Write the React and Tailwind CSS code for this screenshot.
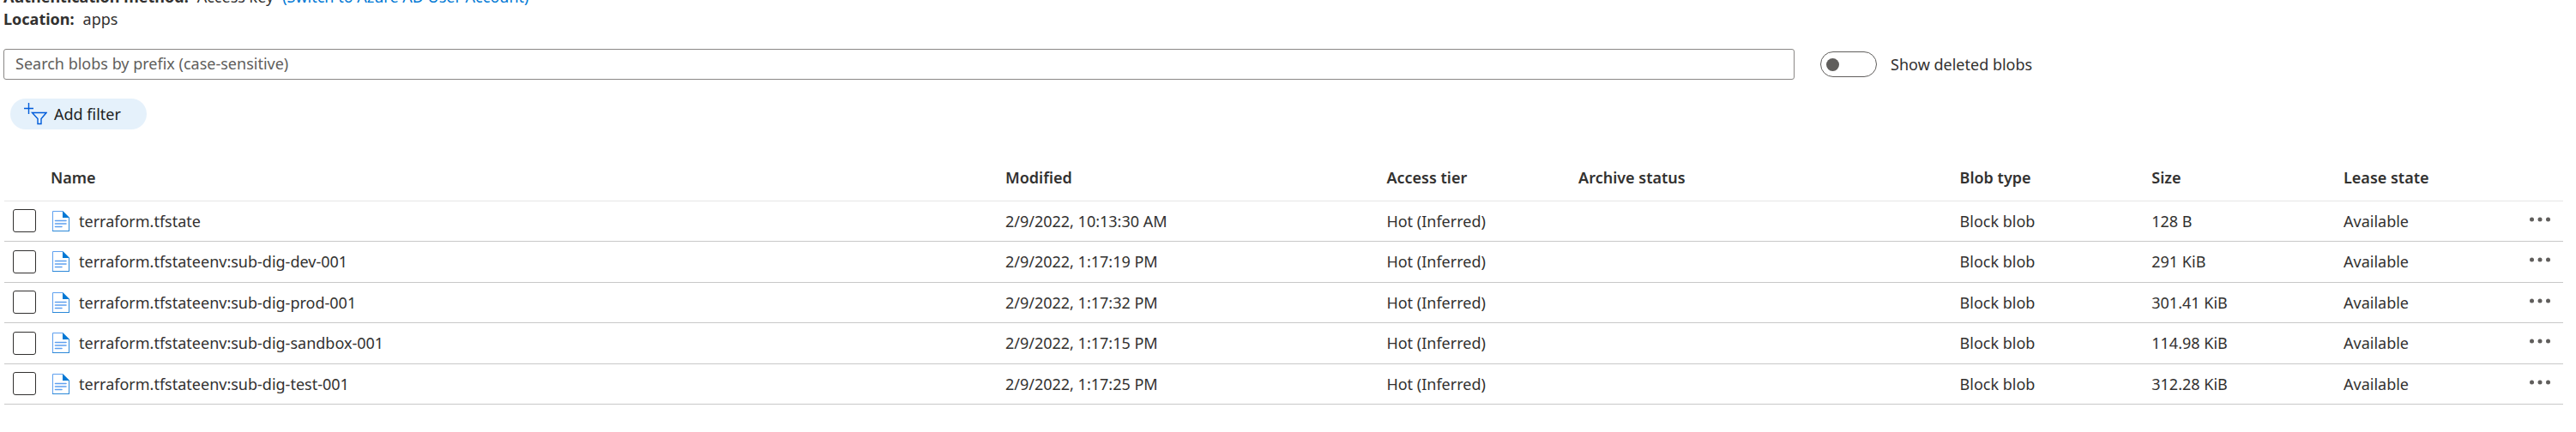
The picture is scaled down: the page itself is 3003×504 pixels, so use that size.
import { useState } from 'react'

const blobs = [
  { name: 'terraform.tfstate', modified: '2/9/2022, 10:13:30 AM', size: '128 B' },
  { name: 'terraform.tfstateenv:sub-dig-dev-001', modified: '2/9/2022, 1:17:19 PM', size: '291 KiB' },
  { name: 'terraform.tfstateenv:sub-dig-prod-001', modified: '2/9/2022, 1:17:32 PM', size: '301.41 KiB' },
  { name: 'terraform.tfstateenv:sub-dig-sandbox-001', modified: '2/9/2022, 1:17:15 PM', size: '114.98 KiB' },
  { name: 'terraform.tfstateenv:sub-dig-test-001', modified: '2/9/2022, 1:17:25 PM', size: '312.28 KiB' },
]

function FileIcon() {
  return (
    <svg width="20" height="24" viewBox="0 0 20 24" aria-hidden="true" className="shrink-0">
      <path d="M0.5 0.5H12L19.5 8V23.5H0.5Z" fill="#fff" stroke="#5ea0ef" />
      <path d="M12 0L20 8H12Z" fill="#0078d4" />
      <path d="M0 23.5H20M19.5 8V24" stroke="#2b88d8" fill="none" />
      <path d="M3.5 11.5H16M3.5 15H16M3.5 18.5H11" stroke="#5ea0ef" strokeWidth="1.6" strokeLinecap="round" />
    </svg>
  )
}

function FilterIcon() {
  return (
    <svg width="27" height="26" viewBox="0 0 27 26" aria-hidden="true" fill="none" stroke="#015cda" strokeWidth="1.4">
      <path d="M5.5 0V13M0 6.5H11" />
      <path d="M9.5 11.5H26L20 18.5V24.5H16V18.5Z" />
    </svg>
  )
}

function BlobRow({ blob, checked, onToggle }) {
  return (
    <tr className="h-[47px] even:h-12 border-b border-[#c8c8c8]">
      <td className="pl-[10px]">
        <input type="checkbox" aria-label={`Select ${blob.name}`} checked={checked} onChange={onToggle} className="block size-[27px] appearance-none rounded-[3px] border border-[#323130] bg-white checked:bg-[#0078d4]" />
      </td>
      <td>
        <a href="#" className="flex items-center gap-[11px] pl-[2px]"><FileIcon />{blob.name}</a>
      </td>
      <td>{blob.modified}</td>
      <td>Hot (Inferred)</td>
      <td></td>
      <td>Block blob</td>
      <td>{blob.size}</td>
      <td>Available</td>
      <td>
        <button aria-label={`More actions for ${blob.name}`} className="ml-auto mr-[14px] flex h-7 w-[26px] items-start justify-center pt-[9px]">
          <svg width="26" height="6" viewBox="0 0 26 6" fill="#605e5c"><circle cx="3.5" cy="3" r="2.5" /><circle cx="13" cy="3" r="2.5" /><circle cx="22.5" cy="3" r="2.5" /></svg>
        </button>
      </td>
    </tr>
  )
}

export default function App() {
  const [prefix, setPrefix] = useState('')
  const [showDeleted, setShowDeleted] = useState(false)
  const [selected, setSelected] = useState([])
  const toggle = (name) => setSelected(prev => prev.includes(name) ? prev.filter(n => n !== name) : [...prev, name])
  return (
    <div className="overflow-hidden bg-white pl-1 pr-4 font-['Noto_Sans',sans-serif] text-[18px] leading-[26px] text-[#323130]">
      <div className="-mt-[17px]">
        <div><b className="font-bold">Authentication method:</b><span className="mx-[10px]">Access key</span><a href="#" className="text-[#0078d4]">(Switch to Azure AD User Account)</a></div>
        <div><b className="font-bold">Location:</b><span className="mx-[10px]">apps</span></div>
      </div>
      <div className="mt-[22px] flex items-center">
        <input type="text" aria-label="Search blobs by prefix" placeholder="Search blobs by prefix (case-sensitive)" value={prefix} onChange={e => setPrefix(e.target.value)} className="h-9 w-[70%] rounded-[3px] border border-[#8a8886] px-[13px] pb-[2px] placeholder:text-[#605e5c]" />
        <label className="ml-[30px] flex items-center gap-4">
          <input type="checkbox" role="switch" checked={showDeleted} onChange={e => setShowDeleted(e.target.checked)} className="flex h-[30px] w-[66px] appearance-none items-center rounded-full border border-[#605e5c] px-[6px] before:size-[15px] before:rounded-full before:bg-[#605e5c] checked:justify-end" />
          Show deleted blobs
        </label>
      </div>
      <button className="ml-2 mt-[22px] flex h-9 items-center gap-2 rounded-full bg-[#e5f1fb] pl-4 pr-[30px] text-[#201f1e]"><FilterIcon />Add filter</button>
      <table className="ml-px mt-[29px] w-full table-fixed border-collapse text-left">
        <thead>
          <tr className="h-[54px] border-b border-[#e6e6e6]">
            <th className="w-[54px]"></th>
            <th className="font-semibold">Name</th>
            <th className="w-[14.9%] font-semibold">Modified</th>
            <th className="w-[7.5%] font-semibold">Access tier</th>
            <th className="w-[14.9%] font-semibold">Archive status</th>
            <th className="w-[7.5%] font-semibold">Blob type</th>
            <th className="w-[7.5%] font-semibold">Size</th>
            <th className="w-48 font-semibold">Lease state</th>
            <th className="w-16"></th>
          </tr>
        </thead>
        <tbody>
          {blobs.map(blob => (
            <BlobRow key={blob.name} blob={blob} checked={selected.includes(blob.name)} onToggle={() => toggle(blob.name)} />
          ))}
        </tbody>
      </table>
    </div>
  )
}
